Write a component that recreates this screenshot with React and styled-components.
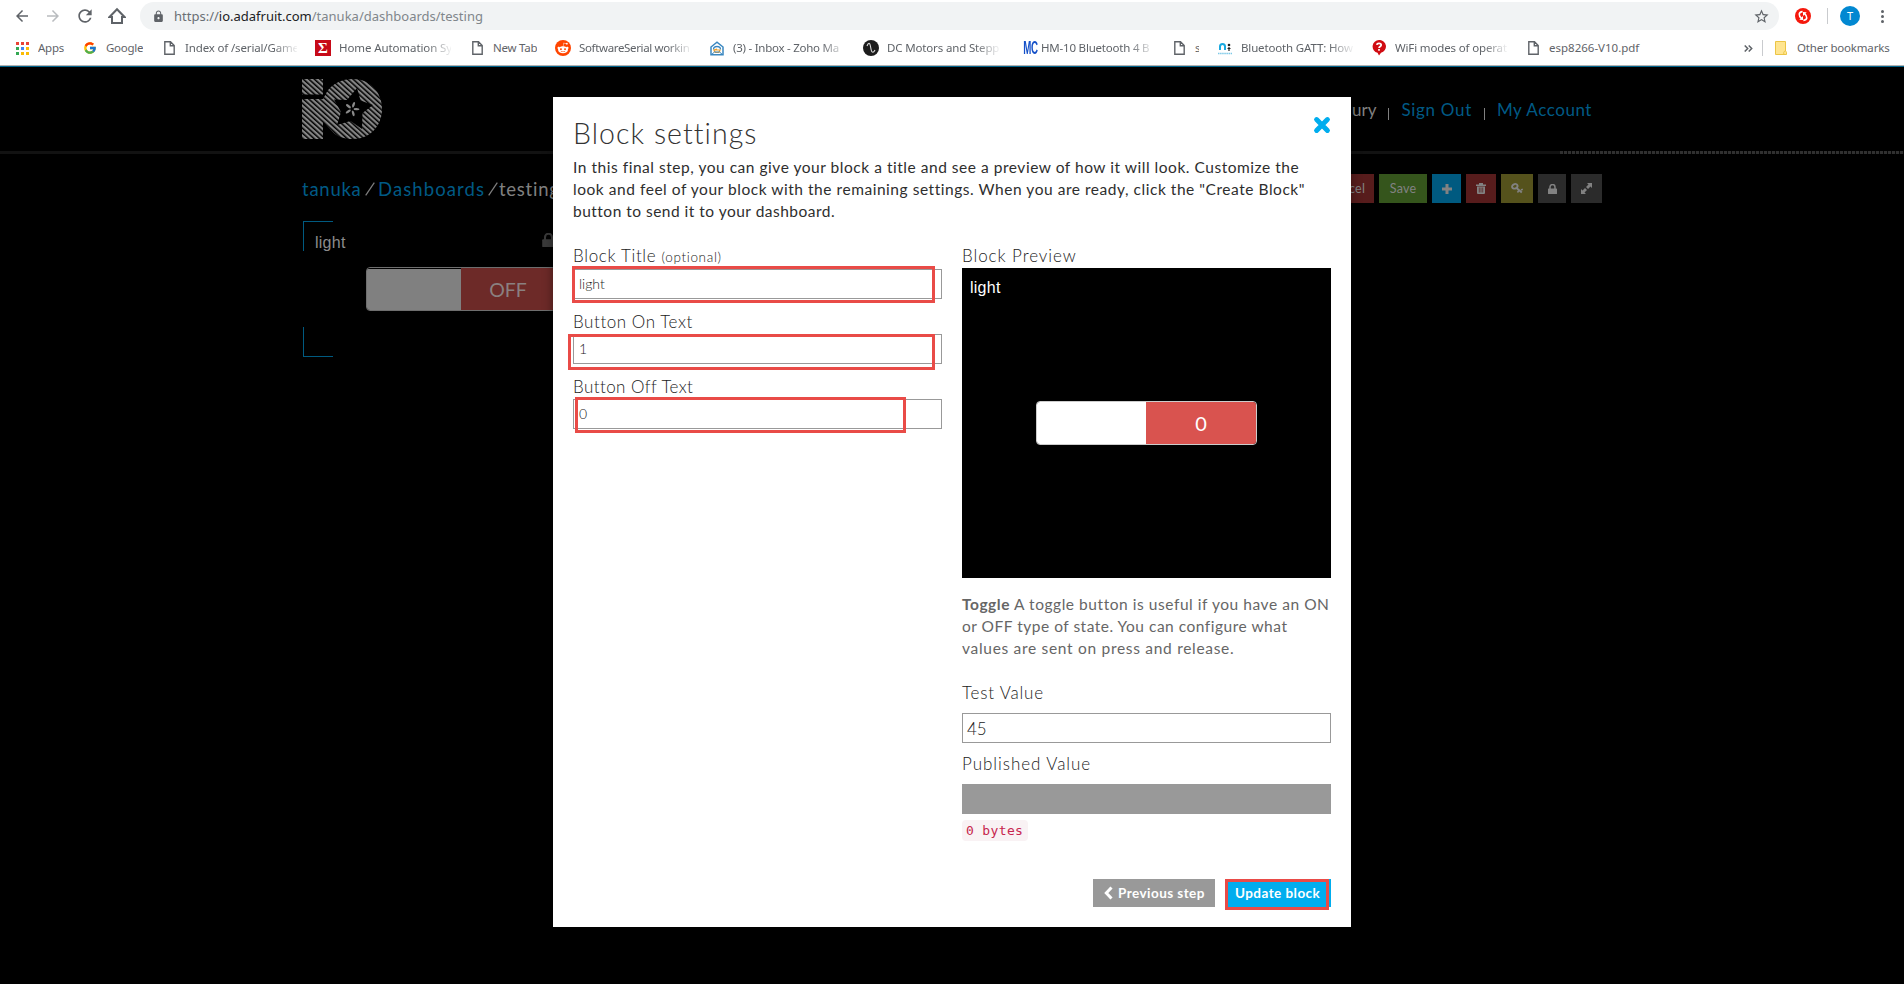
import React from 'react';
import styled, { createGlobalStyle } from 'styled-components';
import { MdArrowBack, MdArrowForward, MdRefresh, MdLock, MdStarBorder } from 'react-icons/md';
import { FcGoogle } from 'react-icons/fc';
import { FaRedditAlien } from 'react-icons/fa';

const lato = 'Lato, "Open Sans", sans-serif';
const ui = '"Noto Sans", "Open Sans", sans-serif';

const GlobalStyle = createGlobalStyle`
  * { box-sizing: border-box; }
  body { margin: 0; background: #000; overflow: hidden; }
  svg { display: block; flex: none; }
`;

const Screen = styled.div`
  width: 1904px;
  height: 984px;
  display: flex;
  flex-direction: column;
  overflow: hidden;
  background: #000;
`;

/* ---------- browser chrome ---------- */

const Browser = styled.header`
  height: 67px;
  flex: none;
  background: #fff;
  border-bottom: 1px solid #00628a;
  box-shadow: inset 0 -1px 0 #b1b1b1;
  font-family: ${ui};
`;

const AddressRow = styled.div`
  display: flex;
  align-items: center;
  height: 32px;
  padding: 0 16px 0 13px;
`;

const NavIcons = styled.div`
  display: flex;
  align-items: center;
  gap: 13px;
  width: 127px;
  color: #5f6368;
`;

const AddressBar = styled.div`
  display: flex;
  align-items: center;
  flex: none;
  width: 1639px;
  height: 28px;
  padding: 0 9px 0 12px;
  border-radius: 14px;
  background: #f1f3f4;
  color: #5f6368;
`;

const Url = styled.span`
  flex: 1;
  margin-left: 9px;
  font-size: 13px;
  line-height: 20px;
  color: #80868b;
  b { font-weight: 400; color: #202124; }
  i { font-style: normal; color: #6a6f74; }
`;

const Extensions = styled.div`
  display: flex;
  align-items: center;
  margin-left: 16px;
`;

const Divider = styled.span`
  width: 1px;
  height: 16px;
  background: #c9cbce;
  margin: ${(p) => p.$margin};
`;

const Avatar = styled.span`
  width: 20px;
  height: 20px;
  border-radius: 50%;
  background: #0288d1;
  color: #fff;
  font-size: 11px;
  line-height: 20px;
  text-align: center;
`;

const Dots = styled.span`
  display: grid;
  gap: 2px;
  margin-left: 21px;
  &::before, &::after, i { content: ''; width: 3px; height: 3px; border-radius: 50%; background: #5f6368; }
`;

const Bookmarks = styled.nav`
  display: flex;
  align-items: center;
  height: 32px;
  padding-left: 14px;
`;

const Bookmark = styled.span`
  display: flex;
  align-items: center;
  gap: 8px;
  margin-right: 18px;
`;

const BookmarkIcon = styled.span`
  width: 16px;
  height: 16px;
  display: grid;
  place-items: center;
`;

const BookmarkText = styled.span`
  width: ${(p) => p.$w}px;
  height: 18px;
  overflow: hidden;
  white-space: nowrap;
  font-size: 11.5px;
  line-height: 17px;
  letter-spacing: ${(p) => p.$ls ?? -0.25}px;
  color: #5f6368;
  ${(p) => p.$w === 112 && 'mask-image: linear-gradient(90deg, #000 88px, transparent 114px);'}
`;

const SigmaTile = styled.span`
  width: 16px;
  height: 16px;
  background: #c70a18;
  color: #fff;
  font: 700 15px/16px "Liberation Serif", serif;
  text-align: center;
`;

const RoundTile = styled.span`
  width: 16px;
  height: 16px;
  display: grid;
  place-items: center;
  border-radius: 50%;
  background: ${(p) => p.$bg};
  color: #fff;
`;

const McMark = styled.span`
  display: grid;
  place-items: center;
  font: 700 18px/16px "Liberation Sans", sans-serif;
  color: #1450c8;
  letter-spacing: -0.5px;
  transform: scaleX(0.54);
`;

const OtherBookmarks = styled.span`
  width: 92px;
  margin-left: 10px;
  white-space: nowrap;
  font-size: 11.5px;
  line-height: 18px;
  letter-spacing: -0.18px;
  color: #5f6368;
`;

const BookmarkEnd = styled.div`
  display: flex;
  align-items: center;
  margin-left: auto;
  padding-right: 15px;
`;

/* ---------- page behind the dialog ---------- */

const Page = styled.main`
  position: relative;
  flex: 1;
  background: #000;
  font-family: ${lato};
`;

const SiteHeader = styled.div`
  display: flex;
  align-items: flex-start;
  justify-content: space-between;
  height: 84px;
  padding: 12px 312px 0 302px;
`;

const Account = styled.div`
  display: flex;
  align-items: center;
  margin-top: 20px;
  font-size: 17px;
  line-height: 22px;
  color: #808080;
`;

const AccountLink = styled.span`
  color: #005a85;
  letter-spacing: ${(p) => p.$ls}px;
`;

const AccountBar = styled.i`
  width: 1px;
  height: 12px;
  margin: 8px 12px 0;
  background: #808080;
`;

const HeaderRule = styled.div`
  display: flex;
  height: 3px;
  background: #121212;
  &::after {
    content: '';
    width: 344px;
    margin-left: auto;
    background: repeating-linear-gradient(90deg, #303030 0 3px, #080808 3px 4px);
  }
`;

const TitleRow = styled.div`
  display: flex;
  align-items: center;
  justify-content: space-between;
  height: 29px;
  margin: 20px 302px 0;
`;

const Crumbs = styled.div`
  display: flex;
  align-items: center;
  font-size: 18.5px;
  letter-spacing: 0.75px;
  line-height: 28px;
  color: #808080;
`;

const CrumbLink = styled.span`
  color: #005a85;
  width: ${(p) => p.$w}px;
  letter-spacing: ${(p) => p.$ls}px;
`;

const CrumbSlash = styled.span`
  display: flex;
  width: ${(p) => p.$w}px;
  padding-left: 3px;
`;

const Actions = styled.div`
  display: flex;
  gap: 5px;
`;

const Action = styled.span`
  display: grid;
  place-items: center;
  width: ${(p) => p.$w}px;
  height: 29px;
  background: ${(p) => p.$bg};
  color: #828282;
  font-size: 12.5px;
  letter-spacing: 0.2px;
`;

const BlockFrame = styled.section`
  display: flex;
  flex-direction: column;
  width: 315px;
  height: 136px;
  margin: 18px 0 0 303px;
  --c: #005a80;
  background:
    linear-gradient(var(--c), var(--c)) 0 0 / 30px 1px,
    linear-gradient(var(--c), var(--c)) 0 0 / 1px 30px,
    linear-gradient(var(--c), var(--c)) 0 100% / 30px 1px,
    linear-gradient(var(--c), var(--c)) 0 100% / 1px 30px;
  background-repeat: no-repeat;
`;

const BlockHead = styled.div`
  display: flex;
  align-items: center;
  justify-content: space-between;
  height: 46px;
  padding: 0 63px 2px 12px;
  color: #3a3a3a;
  svg { margin-bottom: 6px; }
`;

const BlockName = styled.span`
  font: 16px/20px "Liberation Sans", sans-serif;
  letter-spacing: 0.25px;
  color: ${(p) => p.$color};
`;

const Toggle = styled.div`
  display: grid;
  grid-template-columns: 109px 1fr;
  width: ${(p) => p.$w}px;
  height: 44px;
  flex: none;
  border: 1px solid ${(p) => (p.$dim ? '#6e6e6e' : '#ccc')};
  border-radius: 4px;
  overflow: hidden;
  ${(p) => p.$dim && 'grid-template-columns: 1fr 1fr; margin-left: 63px;'}
`;

const ToggleBlank = styled.span`
  background: ${(p) => (p.$dim ? '#808080' : '#fff')};
  ${(p) => p.$dim && 'border-top: 1px solid #000;'}
`;

const ToggleLabel = styled.span`
  display: grid;
  place-items: center;
  background: ${(p) => (p.$dim ? '#6d2a28' : '#d9534f')};
  color: ${(p) => (p.$dim ? '#8a8080' : '#fff')};
  font-size: ${(p) => (p.$dim ? 19.5 : 20)}px;
`;

/* ---------- dialog ---------- */

const Dialog = styled.div`
  position: absolute;
  left: 553px;
  top: 30px;
  width: 798px;
  height: 830px;
  padding: 16px 20px 20px;
  background: #fff;
  box-shadow: 0 0 10px rgba(0, 0, 0, 0.4);
  color: #333;
`;

const DialogHead = styled.div`
  display: flex;
  justify-content: space-between;
  height: 40px;
  svg { margin-top: 3px; }
`;

const DialogTitle = styled.h2`
  margin: 0;
  font-weight: 300;
  font-size: 28.5px;
  line-height: 40px;
  letter-spacing: 1.05px;
`;

const Copy = styled.p`
  margin: ${(p) => p.$margin};
  font-size: 15.5px;
  line-height: 22px;
  color: ${(p) => p.$color};
`;

const Line = styled.span`
  display: block;
  white-space: nowrap;
  letter-spacing: ${(p) => p.$ls}px;
`;

const Columns = styled.div`
  display: grid;
  grid-template-columns: 369px 369px;
  gap: 20px;
  padding-top: 24px;
`;

const Column = styled.div`
  display: flex;
  flex-direction: column;
`;

const Label = styled.label`
  height: 20px;
  margin: ${(p) => p.$margin ?? '0 0 2px'};
  font-weight: 300;
  font-size: 17px;
  line-height: 19px;
  letter-spacing: ${(p) => p.$ls}px;
  white-space: nowrap;
  color: #222;
  small { font-size: 13.5px; letter-spacing: 0.65px; }
`;

const Field = styled.div`
  position: relative;
  height: 30px;
  margin-bottom: ${(p) => p.$after ?? 13}px;
  padding: ${(p) => (p.$large ? '1px 4px 0' : '0 5px')};
  border: 1px solid #999;
  background: ${(p) => (p.$filled ? '#999' : '#fff')};
  font-weight: 300;
  font-size: ${(p) => (p.$large ? 17 : 14)}px;
  line-height: 28px;
  color: #222;
`;

const Marker = styled.span`
  position: absolute;
  inset: ${(p) => p.$inset};
  border: 3px solid #e94b47;
`;

const Preview = styled.div`
  display: flex;
  flex-direction: column;
  height: 310px;
  padding: 10px 8px;
  background: #000;
`;

const PreviewToggle = styled.div`
  display: grid;
  place-items: center;
  padding: 103px 0 0;
`;

const Bytes = styled.code`
  align-self: flex-start;
  width: 66px;
  height: 21px;
  border-radius: 4px;
  padding-left: 4px;
  background: #f9f2f4;
  color: #c7254e;
  font: 13px/21px "DejaVu Sans Mono", monospace;
  letter-spacing: 0.35px;
`;

const Footer = styled.div`
  display: flex;
  justify-content: flex-end;
  gap: 10px;
  margin-top: 38px;
`;

const StepButton = styled.span`
  position: relative;
  display: flex;
  align-items: center;
  gap: 5px;
  width: ${(p) => p.$w}px;
  height: 28px;
  padding-left: ${(p) => p.$pad}px;
  background: ${(p) => p.$bg};
  color: #fff;
  font-weight: 700;
  font-size: 13.5px;
  letter-spacing: 0.45px;
  white-space: nowrap;
`;

/* ---------- icons ---------- */

const PageIcon = () => (
  <svg width="11" height="14" viewBox="0 0 11 14" fill="none" stroke="#5f6368" strokeWidth="1.4">
    <path d="M.8.8h5.7l3.7 3.7v8.7H.8zM6.3.8v3.9h3.9" />
  </svg>
);

const appColors = ['#ea4335', '#ea4335', '#ea4335', '#34a853', '#4285f4', '#fbbc05', '#34a853', '#fbbc05', '#fbbc05'];
const AppsIcon = () => (
  <svg width="13" height="13">
    {appColors.map((c, i) => (
      <rect key={i} x={(i % 3) * 5} y={Math.floor(i / 3) * 5} width="3" height="3" fill={c} />
    ))}
  </svg>
);

const HomeIcon = () => (
  <svg width="18" height="18" viewBox="0 0 18 18" fill="none" stroke="#5f6368" strokeWidth="2">
    <path d="M1.5 10 9 2.2l7.5 7.8H14v6H4v-6z" />
  </svg>
);

const ZohoIcon = () => (
  <svg width="14" height="15" viewBox="0 0 14 15" fill="none">
    <path d="M1 6 7 1.2 13 6v7.800H1z" fill="#fff" stroke="#3a87c0" strokeWidth="1.5" />
    <path d="M3.5 8.5a3.5 3 0 0 1 7 0" stroke="#3a87c0" strokeWidth="1.3" />
    <path d="M4 9h6a3 2.5 0 0 1-6 0l3-1" stroke="#f0a02c" strokeWidth="1.2" />
    <path d="m1.5 13.5 3-2.5h5l3 2.5" stroke="#3a87c0" />
  </svg>
);

const WaveIcon = () => (
  <svg width="10" height="12" viewBox="0 0 10 12" fill="none" stroke="#ddd" strokeWidth="1.1">
    <path d="M1 4c1.5-4 3-3 3.4 0l.8 4C5.7 11 7.5 11 9 8" />
  </svg>
);

const NovelIcon = () => (
  <svg width="16" height="13" viewBox="0 0 16 13" fill="none">
    <path d="M3 8V4.5a2.5 2.5 0 0 1 5 0V8" stroke="#19a9e0" strokeWidth="2" />
    <circle cx="12" cy="3" r="1.3" fill="#222" />
    <path d="M10.5 6.5h3M12 5v4" stroke="#222" strokeWidth="1.2" />
    <path d="M1 11.5h14" stroke="#7cc9e8" strokeWidth="1.5" strokeDasharray="1.5 .6" />
  </svg>
);

const QuestionIcon = () => (
  <svg width="14" height="16" viewBox="0 0 14 16">
    <path d="M7 0a6.5 6.5 0 0 1 2 12.8L7 15.5l-1.500-2.700A6.500 6.500 0 0 1 7 0z" fill="#d00c12" />
    <path d="M4.8 4.8C5 2.8 9.2 2.8 9.2 5c0 1.5-2 1.5-2.2 3M7 9v1.8" fill="none" stroke="#fff" strokeWidth="1.7" />
  </svg>
);

const FolderIcon = () => (
  <svg width="12" height="15" viewBox="0 0 12 15" fill="#ffe590" stroke="#ecc545">
    <path d="M.5.5h10V10q1 .3 1 1.800v1.700H.5z" />
    <path d="M8.800 13.500v-2.200q.2-1.200 1.700-1.300" fill="none" />
  </svg>
);

const SyncBadge = () => (
  <svg width="16" height="16" viewBox="0 0 16 16">
    <circle cx="8" cy="8" r="8" fill="#f5180c" />
    <g fill="none" stroke="#fff" strokeWidth="1.6">
      <path d="M7.600 3.600C3.300 4 3.300 7.500 6.600 10.600" />
      <path d="M8.400 12.400c4.300-.4 4.300-3.900 1-7" />
    </g>
    <path d="M4.300 11.800 8 12V8zM11.700 4.200 8 4v4z" fill="#fff" />
  </svg>
);

const IoLogo = () => (
  <svg width="80" height="60" viewBox="0 0 80 60">
    <defs>
      <pattern id="stripes" width="10" height="3.7" patternUnits="userSpaceOnUse" patternTransform="rotate(42)">
        <rect width="10" height="2.2" fill="#858585" />
      </pattern>
    </defs>
    <path
      fill="url(#stripes)"
      d="M0 0h21v15.500H0zM0 20h21l2.500-4.500C28 6 38 0 51 0c17 0 29 13 29 30S68 60 51 60c-9 0-16-2-21-8l-9-9v17H0z"
    />
    <path d="M55 9l3.500 12.500L71 26l-10.500 8L60 50l-11.500-8L35 46l4-13-7-12.500 13 .5z" fill="#000" />
    <g fill="#8a8a8a">
      {[20, 92, 164, 236, 308].map((a) => (
        <ellipse key={a} cx="50" cy="25.500" rx="1.200" ry="3" transform={`rotate(${a} 50 30)`} />
      ))}
    </g>
  </svg>
);

const Lock = ({ w = 9, h = 10 }) => (
  <svg width={w} height={h} viewBox="0 0 9 10">
    <path d="M2 5V3a2.500 2.500 0 0 1 5 0v2" fill="none" stroke="currentColor" strokeWidth="1.500" />
    <rect y="4.500" width="9" height="5.500" rx=".6" fill="currentColor" />
  </svg>
);

const Plus = () => (
  <svg width="10" height="10">
    <path d="M5 0v10M0 5h10" stroke="currentColor" strokeWidth="3" />
  </svg>
);

const Trash = () => (
  <svg width="10" height="11" viewBox="0 0 10 11" fill="currentColor">
    <path d="M3 1.500V0h4v1.500h3V3H0V1.500zM1 3.500h8V10q0 1-1 1H2q-1 0-1-1z" />
    <path d="M3.300 4.500v5M5 4.500v5M6.700 4.500v5" stroke="#571c1c" strokeWidth=".7" />
  </svg>
);

const Key = () => (
  <svg width="12" height="11" viewBox="0 0 12 11" fill="none" stroke="currentColor">
    <ellipse cx="3.800" cy="3.300" rx="2.800" ry="2.200" strokeWidth="1.900" transform="rotate(-25 3.800 3.300)" />
    <path d="M5.500 5l5.300 4.500" strokeWidth="1.900" />
    <path d="M7.800 7.500 6.500 9.500M10 7l1.800-.8" strokeWidth="1.500" />
  </svg>
);

const Expand = () => (
  <svg width="11" height="11" viewBox="0 0 11 11" fill="currentColor">
    <path d="M6 0h5v5L9.500 3.500 7 6 5 4l2.500-2.500zM5 11H0V6l1.500 1.500L4 5l2 2-2.500 2.500z" />
  </svg>
);

const Close = () => (
  <svg width="18" height="18" viewBox="0 0 18 18">
    <path d="m3.600 3.600 10.800 10.800M14.400 3.600 3.600 14.400" stroke="#00adee" strokeWidth="5" strokeLinecap="round" />
  </svg>
);

const ChevronLeft = () => (
  <svg width="9" height="14" viewBox="0 0 9 14">
    <path d="M7.500 1.500 2.300 7l5.200 5.500" fill="none" stroke="#fff" strokeWidth="3" />
  </svg>
);

const Slash = () => (
  <svg width="10" height="14">
    <path d="M.7 13.300 9.300.7" stroke="#808080" strokeWidth="1.200" />
  </svg>
);

/* ---------- content ---------- */

const bookmarks = [
  { icon: <AppsIcon />, text: 'Apps', w: 26 },
  { icon: <FcGoogle size={14} />, text: 'Google', w: 37 },
  { icon: <PageIcon />, text: 'Index of /serial/Game', w: 112, ls: -0.15 },
  { icon: <SigmaTile>Σ</SigmaTile>, text: 'Home Automation Sy', w: 112, ls: -0.1 },
  { icon: <PageIcon />, text: 'New Tab', w: 44 },
  { icon: <RoundTile $bg="#ff4500"><FaRedditAlien size={12} /></RoundTile>, text: 'SoftwareSerial workin', w: 112, ls: -0.35 },
  { icon: <ZohoIcon />, text: '(3) - Inbox - Zoho Ma', w: 112, ls: -0.25 },
  { icon: <RoundTile $bg="#1c1c1c"><WaveIcon /></RoundTile>, text: 'DC Motors and Stepp', w: 112, ls: -0.15 },
  { icon: <McMark>MC</McMark>, text: 'HM-10 Bluetooth 4 B', w: 112, ls: -0.2 },
  { icon: <PageIcon />, text: 's', w: 4 },
  { icon: <NovelIcon />, text: 'Bluetooth GATT: How', w: 112, ls: -0.15 },
  { icon: <QuestionIcon />, text: 'WiFi modes of operat', w: 112, ls: -0.15 },
  { icon: <PageIcon />, text: 'esp8266-V10.pdf', w: 92, ls: 0 },
];

const fields = [
  { label: 'Block Title', note: '(optional)', value: 'light', mark: '-4px 6px -5px -2px', ls: 0.66, margin: '0 0 3px' },
  { label: 'Button On Text', value: '1', mark: '-1px 6px -7px -6px', ls: 0.56 },
  { label: 'Button Off Text', value: '0', mark: '-3px 35px -5px 1px', ls: 0.42 },
];

export default function App() {
  return (
    <Screen>
      <GlobalStyle />
      <Browser>
        <AddressRow>
          <NavIcons>
            <MdArrowBack size={18} />
            <MdArrowForward size={18} color="#b9bcbf" />
            <MdRefresh size={20} />
            <HomeIcon />
          </NavIcons>
          <AddressBar>
            <MdLock size={13} />
            <Url><i>https://</i><b>io.adafruit.com</b>/tanuka/dashboards/testing</Url>
            <MdStarBorder size={17} />
          </AddressBar>
          <Extensions>
            <SyncBadge />
            <Divider $margin="0 12px 0 16px" />
            <Avatar>T</Avatar>
            <Dots><i /></Dots>
          </Extensions>
        </AddressRow>
        <Bookmarks>
          {bookmarks.map((b) => (
            <Bookmark key={b.text}>
              <BookmarkIcon>{b.icon}</BookmarkIcon>
              <BookmarkText $w={b.w} $ls={b.ls}>{b.text}</BookmarkText>
            </Bookmark>
          ))}
          <BookmarkEnd>
            <svg width="9" height="7" fill="none" stroke="#5f6368" strokeWidth="1.5">
              <path d="M.7.5l3 3-3 3M4.7.5l3 3-3 3" />
            </svg>
            <Divider $margin="0 12px 0 9px" />
            <FolderIcon />
            <OtherBookmarks>Other bookmarks</OtherBookmarks>
          </BookmarkEnd>
        </Bookmarks>
      </Browser>

      <Page>
        <SiteHeader>
          <IoLogo />
          <Account>
            <span>ury</span>
            <AccountBar />
            <AccountLink $ls={0.7}>Sign Out</AccountLink>
            <AccountBar />
            <AccountLink $ls={0.55}>My Account</AccountLink>
          </Account>
        </SiteHeader>
        <HeaderRule />
        <TitleRow>
          <Crumbs>
            <CrumbLink $w={60} $ls={0.75}>tanuka</CrumbLink>
            <CrumbSlash $w={16}><Slash /></CrumbSlash>
            <CrumbLink $w={107} $ls={1.1}>Dashboards</CrumbLink>
            <CrumbSlash $w={14}><Slash /></CrumbSlash>
            <span>testing</span>
          </Crumbs>
          <Actions>
            <Action $w={56} $bg="#571c1c">Cancel</Action>
            <Action $w={48} $bg="#35551c">Save</Action>
            <Action $w={29} $bg="#005a80"><Plus /></Action>
            <Action $w={30} $bg="#571c1c"><Trash /></Action>
            <Action $w={32} $bg="#55521c"><Key /></Action>
            <Action $w={28} $bg="#2b2b2b"><Lock /></Action>
            <Action $w={31} $bg="#2b2b2b"><Expand /></Action>
          </Actions>
        </TitleRow>
        <BlockFrame>
          <BlockHead>
            <BlockName $color="#8c8c8c">light</BlockName>
            <Lock w={13} h={14} />
          </BlockHead>
          <Toggle $w={190} $dim>
            <ToggleBlank $dim />
            <ToggleLabel $dim>OFF</ToggleLabel>
          </Toggle>
        </BlockFrame>

        <Dialog>
          <DialogHead>
            <DialogTitle>Block settings</DialogTitle>
            <Close />
          </DialogHead>
          <Copy $margin="3px 0 0" $color="#2e2e2e">
            <Line $ls={0.53}>In this final step, you can give your block a title and see a preview of how it will look. Customize the</Line>
            <Line $ls={0.54}>look and feel of your block with the remaining settings. When you are ready, click the "Create Block"</Line>
            <Line $ls={0.49}>button to send it to your dashboard.</Line>
          </Copy>
          <Columns>
            <Column>
              {fields.map((f) => (
                <React.Fragment key={f.label}>
                  <Label $ls={f.ls} $margin={f.margin}>{f.label} {f.note && <small>{f.note}</small>}</Label>
                  <Field>{f.value}<Marker $inset={f.mark} /></Field>
                </React.Fragment>
              ))}
            </Column>
            <Column>
              <Label $ls={0.93}>Block Preview</Label>
              <Preview>
                <BlockName $color="#fff">light</BlockName>
                <PreviewToggle>
                  <Toggle $w={221}>
                    <ToggleBlank />
                    <ToggleLabel>0</ToggleLabel>
                  </Toggle>
                </PreviewToggle>
              </Preview>
              <Copy $margin="15px 0 24px" $color="#666">
                <Line $ls={0.55}><b>Toggle</b> A toggle button is useful if you have an ON</Line>
                <Line $ls={0.51}>or OFF type of state. You can configure what</Line>
                <Line $ls={0.7}>values are sent on press and release.</Line>
              </Copy>
              <Label $ls={0.8} $margin="0 0 10px">Test Value</Label>
              <Field $large $after={11}>45</Field>
              <Label $ls={0.95} $margin="0 0 10px">Published Value</Label>
              <Field $filled $after={6} />
              <Bytes>0 bytes</Bytes>
              <Footer>
                <StepButton $w={122} $pad={11} $bg="#999"><ChevronLeft />Previous step</StepButton>
                <StepButton $w={106} $pad={10} $bg="#00adee">Update block<Marker $inset="0 2px -3px 0" /></StepButton>
              </Footer>
            </Column>
          </Columns>
        </Dialog>
      </Page>
    </Screen>
  );
}
